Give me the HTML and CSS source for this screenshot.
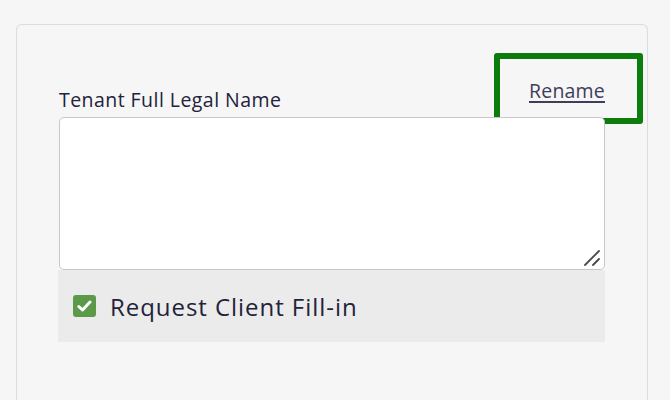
FILE: index.html
```html
<!DOCTYPE html>
<html>
<head>
<meta charset="utf-8">
<link rel="stylesheet" href="styles.css">
</head>
<body>
<div class="card">
  <div class="field">
    <div class="label-row">
      <span class="label">Tenant Full Legal Name</span>
      <span class="rename-box"><a class="rename" href="#">Rename</a></span>
    </div>
    <div class="textarea">
      <svg class="grip" width="18" height="18" viewBox="0 0 18 18"><path d="M2 16 L16 2 M10 16 L16 10" stroke="#4a4a4a" stroke-width="1.8" stroke-linecap="round" fill="none"/></svg>
    </div>
    <div class="fill-row">
      <span class="check"><svg width="15" height="12" viewBox="0 0 15 12"><path d="M1.8 6.5 L5.5 10 L13 2" stroke="#fff" stroke-width="3" fill="none" stroke-linecap="round" stroke-linejoin="round"/></svg></span>
      <span class="fill-text">Request Client Fill-in</span>
    </div>
  </div>
</div>
</body>
</html>
```
FILE: styles.css
```css
html, body {
  margin: 0;
  padding: 0;
  background: #f6f6f6;
  font-family: "Open Sans", "DejaVu Sans", sans-serif;
  color: #22223a;
}
html {
  height: 400px;
  overflow: hidden;
}
body {
  padding: 24px 22px 0 16px;
  height: 400px;
  box-sizing: border-box;
}
.card {
  border: 1.5px solid #dcdcdc;
  border-bottom: none;
  border-radius: 6px 6px 0 0;
  height: 376px;
  box-sizing: border-box;
  padding: 28px 41px 0 41px;
  background: #f6f6f6;
}
.field {
  width: 547px;
}
.label-row {
  display: flex;
  justify-content: space-between;
  align-items: flex-end;
  height: 64px;
  position: relative;
}
.label {
  font-size: 19.5px;
  letter-spacing: 0.45px;
  line-height: 24px;
  margin-left: 1px;
  margin-bottom: 5px;
}
.rename-box {
  position: absolute;
  right: -38px;
  top: 0;
  width: 149px;
  height: 71px;
  border: 6px solid #0c7d0c;
  border-radius: 3px;
  display: flex;
  align-items: center;
  padding-left: 29px;
  padding-top: 4px;
  box-sizing: border-box;
}
.rename {
  font-size: 19.5px;
  color: #3f3d5c;
  text-decoration: underline;
  text-underline-offset: 3px;
  text-decoration-thickness: 1.5px;
  letter-spacing: 0.2px;
}
.textarea {
  height: 151px;
  background: #fff;
  border: 1px solid #c8c8cc;
  border-radius: 5px;
  position: relative;
  margin-left: 1px;
}
.grip {
  position: absolute;
  right: 3px;
  bottom: 2px;
}
.fill-row {
  background: #ebebeb;
  height: 72px;
  display: flex;
  align-items: center;
  padding-left: 15px;
  gap: 14px;
}
.check {
  width: 23px;
  height: 22px;
  background: #5c9a4a;
  border-radius: 3px;
  display: flex;
  align-items: center;
  justify-content: center;
}
.fill-text {
  font-size: 24px;
  letter-spacing: 0.95px;
}
```
